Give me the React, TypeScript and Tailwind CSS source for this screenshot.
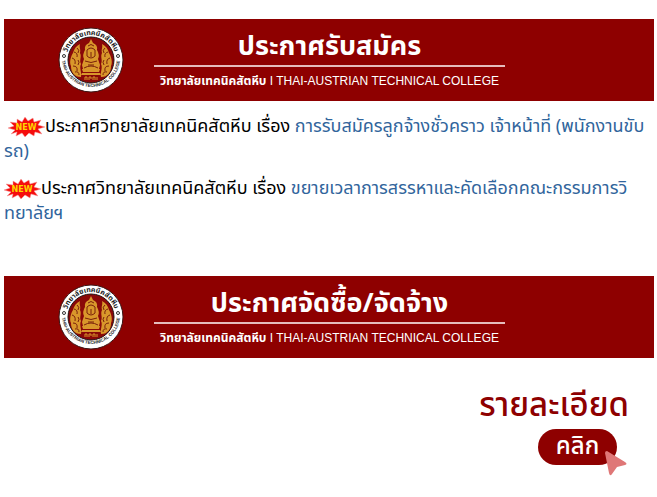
import React from "react";

const THAI = "font-['Noto_Sans_Thai','Noto_Sans','Open_Sans',sans-serif]";

function CollegeSeal({ id }: { id: string }) {
  const wing = "M-10 17C-17 17-20 12-20 6C-22 2-20-4-18-7C-17-11-15-14-11-16C-12-12-10-11-11-7C-9-3-12 0-10 4C-12 8-9 12-10 17Z";
  const veins = "M-19-2Q-15-1-16 4M-18 6Q-13 6-14 11M-17-8Q-13-7-14-3M-14-12Q-11-10-13-7M-16 12Q-12 11-12 15M-13 0Q-11 2-13 5";
  return (
    <svg viewBox="-33 -33 66 66" className="size-[66px] shrink-0" role="img" aria-label="Thai-Austrian Technical College">
      <defs>
        <path id={`${id}-top`} d="M-25 0A25 25 0 0 1 25 0" />
        <path id={`${id}-bottom`} d="M-29 -2A29 29 0 0 0 29 -2" />
      </defs>
      <circle r="32" fill="#fff" stroke="#3a1515" strokeWidth="1" />
      <circle r="23" fill="#8a0808" stroke="#241010" strokeWidth="1" />
      <g fill="#d9972b">
        <path d={wing} />
        <path d={wing} transform="scale(-1 1)" />
        <path d="M0-21L2-17Q7-15 6-10Q9-5 7-1L9 5L8 9H-8L-9 5L-7-1Q-9-5-6-10Q-7-15-2-17Z" />
        <path d="M-9 9H9L8 12H-8ZM-9 13H9L10 15H-10Z" />
      </g>
      <g fill="none" stroke="#79200b" strokeWidth="1">
        <path d="M-3-14Q0-17 3-14M-4-10Q0-14 4-10V-4Q0 0-4-4ZM-6 1Q0 4 6 1M-3 5H3M-7 8Q0 4 7 8M0-8V-3" />
        <path d={veins} />
        <path d={veins} transform="scale(-1 1)" />
      </g>
      <path d="M-6 20V17H-4V20M-2 20V17H0V19M2 20V17H4V20M6 20V17" fill="none" stroke="#d9972b" strokeWidth="1" />
      <text className={THAI} fontSize="7" fontWeight="700" fill="#222" textAnchor="middle">
        <textPath href={`#${id}-top`} startOffset="50%">วิทยาลัยเทคนิคสัตหีบ</textPath>
      </text>
      <text className="font-['Liberation_Sans',sans-serif]" fontSize="4.500" fontWeight="700" fill="#222" textAnchor="middle">
        <textPath href={`#${id}-bottom`} startOffset="50%">THAI-AUSTRIAN TECHNICAL COLLEGE</textPath>
      </text>
      <circle cx="-27" cy="-4" r="1.500" fill="none" stroke="#333" />
      <circle cx="27" cy="-4" r="1.500" fill="none" stroke="#333" />
    </svg>
  );
}

function Banner({ id, title }: { id: string; title: string }) {
  return (
    <header className="flex h-[82px] items-center bg-[#8e0000] pl-[54px] text-white">
      <CollegeSeal id={id} />
      <div className="ml-[30px] flex w-[351px] flex-col items-center whitespace-nowrap">
        <h2 className="pt-[2px] text-[27px] leading-[36px] font-bold">{title}</h2>
        <div className="h-[2px] w-full bg-[#e5bcbc]" />
        <p className="pt-1 pb-[2px] text-[12px] leading-[20px]">
          <span className="font-bold">วิทยาลัยเทคนิคสัตหีบ</span>
          <span className="font-['Liberation_Sans',sans-serif]"> I THAI-AUSTRIAN TECHNICAL COLLEGE</span>
        </p>
      </div>
    </header>
  );
}

function NewBadge() {
  return (
    <svg viewBox="0 0 37 20" className="inline-block h-5 w-[37px] align-middle" role="img" aria-label="New">
      <path d="M0 11L6 9L2 5L9 6L9 2L14 5L17 0L20 4L25 1L26 5L33 3L30 8L37 10L30 12L34 17L27 15L26 19L21 16L17 20L14 16L8 19L9 15L3 17L7 13Z" fill="#f50d0d" stroke="#f5a0a0" strokeWidth=".5" />
      <text x="18" y="13" textAnchor="middle" className="font-['DejaVu_Sans',sans-serif]" fontSize="8" fontWeight="700" fill="#ffd500">NEW</text>
    </svg>
  );
}

function Notice({ first, rest, indent = false }: { first: string; rest: string; indent?: boolean }) {
  return (
    <p className={indent ? "whitespace-nowrap indent-1" : "whitespace-nowrap"}>
      <NewBadge />
      ประกาศวิทยาลัยเทคนิคสัตหีบ เรื่อง{" "}
      <a href="#notice" className="text-[#31659c]">{first}<br />{rest}</a>
    </p>
  );
}

export default function App() {
  return (
    <main className={`pt-[19px] pr-[3px] pb-6 pl-1 ${THAI}`}>
      <Banner id="admissions" title="ประกาศรับสมัคร" />
      <section className="flex flex-col gap-3 pt-[13px] text-[18px] leading-[25px] text-black">
        <Notice indent first="การรับสมัครลูกจ้างชั่วคราว เจ้าหน้าที่ (พนักงานขับ" rest="รถ)" />
        <Notice first="ขยายเวลาการสรรหาและคัดเลือกคณะกรรมการวิ" rest="ทยาลัยฯ" />
      </section>
      <div className="mt-[50px]">
        <Banner id="procurement" title="ประกาศจัดซื้อ/จัดจ้าง" />
      </div>
      <section className="flex flex-col items-end pt-[26px] pr-[25px] text-[#8e0000]">
        <h3 className="text-[33px] leading-[44px] font-medium">รายละเอียด</h3>
        <div className="relative mt-px mr-3">
          <button type="button" className="block h-9 w-[79px] rounded-full bg-[#8e0000] text-[24px] leading-9 font-medium text-white">
            คลิก
          </button>
          <svg viewBox="0 0 22 25" className="pointer-events-none absolute top-[22px] left-[67px] h-[25px] w-[22px] overflow-visible" aria-hidden="true">
            <path d="M2 0L20 11Q23 13 20 14L12 16L7 23Q5 26 4 22L0 2Q0 0 2 0Z" fill="#df7777" />
          </svg>
        </div>
      </section>
    </main>
  );
}
